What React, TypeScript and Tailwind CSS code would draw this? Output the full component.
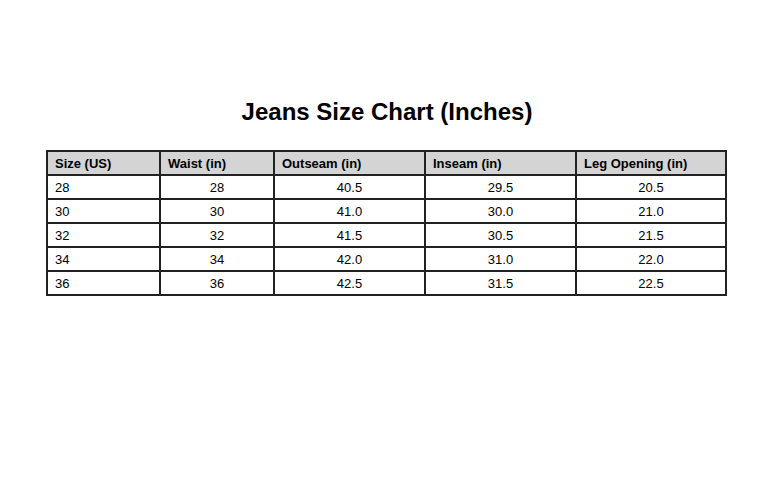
const headers = ['Size (US)', 'Waist (in)', 'Outseam (in)', 'Inseam (in)', 'Leg Opening (in)'];

const rows = [
  ['28', '28', '40.5', '29.5', '20.5'],
  ['30', '30', '41.0', '30.0', '21.0'],
  ['32', '32', '41.5', '30.5', '21.5'],
  ['34', '34', '42.0', '31.0', '22.0'],
  ['36', '36', '42.5', '31.5', '22.5'],
];

const widths = ['w-[113px]', 'w-[114px]', 'w-[151px]', 'w-[151px]', 'w-[150px]'];

export default function App() {
  return (
    <div className="w-[774px] h-[485px] bg-white font-['Liberation_Sans',Arial,sans-serif] text-black">
      <div className="pt-[97px] flex flex-col items-center">
        <h1 className="text-[24px] leading-[30px] font-bold">Jeans Size Chart (Inches)</h1>
        <table className="mt-[23px] ml-[-1px] border-collapse border-2 border-[#222] text-[13px]">
          <thead>
            <tr className="bg-[#d4d4d4] h-[24px]">
              {headers.map((h, i) => (
                <th key={h} className={`${widths[i]} border-2 border-[#222] px-[7px] text-left font-bold leading-none`}>
                  {h}
                </th>
              ))}
            </tr>
          </thead>
          <tbody>
            {rows.map((r) => (
              <tr key={r[0]} className="h-[24px]">
                {r.map((c, i) => (
                  <td
                    key={i}
                    className={`border-2 border-[#222] px-[7px] leading-none ${i === 0 ? 'text-left' : 'text-center'}`}
                  >
                    {c}
                  </td>
                ))}
              </tr>
            ))}
          </tbody>
        </table>
      </div>
    </div>
  );
}
